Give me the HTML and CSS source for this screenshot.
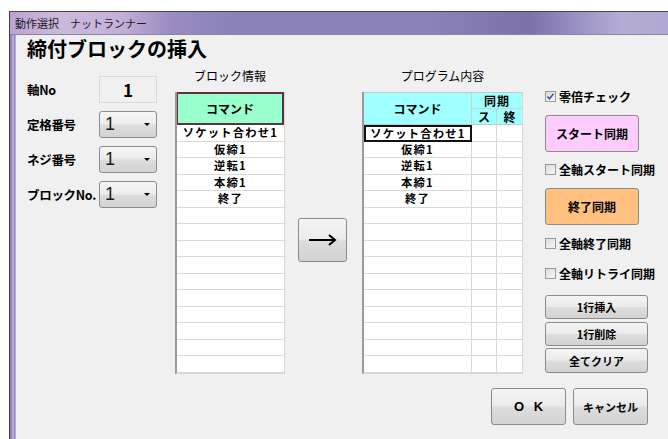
FILE: index.html
```html
<!DOCTYPE html>
<html lang="ja">
<head>
    <meta charset="UTF-8">
    <title>締付ブロックの挿入</title>
    <link rel="stylesheet" href="styles.css">
</head>
<body>

<div class="window">
    <div class="titlebar">動作選択　ナットランナー</div>
    <div class="client">
        <h1 class="dlg-title">締付ブロックの挿入</h1>

        <div class="main">
            <div class="params">
                <div class="param-row">
                    <span class="param-label">軸No</span>
                    <span class="axis-box">1</span>
                </div>
                <div class="param-row">
                    <span class="param-label">定格番号</span>
                    <span class="combo">1</span>
                </div>
                <div class="param-row">
                    <span class="param-label">ネジ番号</span>
                    <span class="combo">1</span>
                </div>
                <div class="param-row">
                    <span class="param-label">ブロックNo.</span>
                    <span class="combo">1</span>
                </div>
            </div>

            <div class="block-col">
                <div class="col-caption">ブロック情報</div>
                <div class="grid block-grid">
                    <div class="block-head">コマンド</div>
                    <div class="row">ソケット合わせ1</div>
                    <div class="row">仮締1</div>
                    <div class="row">逆転1</div>
                    <div class="row">本締1</div>
                    <div class="row">終了</div>
                    <div class="row"></div>
                    <div class="row"></div>
                    <div class="row"></div>
                    <div class="row"></div>
                    <div class="row"></div>
                    <div class="row"></div>
                    <div class="row"></div>
                    <div class="row"></div>
                    <div class="row"></div>
                    <div class="row"></div>
                </div>
            </div>

            <div class="arrow-col">
                <button class="btn arrow-btn" type="button">
                    <svg width="30" height="14" viewBox="0 0 30 14">
                        <path d="M1 7 H27" stroke="#000" stroke-width="2" fill="none"/>
                        <path d="M21 2 L27 7 L21 12" stroke="#000" stroke-width="2" fill="none"/>
                    </svg>
                </button>
            </div>

            <div class="prog-col">
                <div class="col-caption">プログラム内容</div>
                <div class="grid prog-grid">
                    <div class="prog-head">
                        <div class="ph-cmd">コマンド</div>
                        <div class="ph-sync">同期</div>
                        <div class="ph-s">ス</div>
                        <div class="ph-e">終</div>
                    </div>
                    <div class="prow selected"><span class="cmd">ソケット合わせ1</span><span></span><span></span></div>
                    <div class="prow"><span class="cmd">仮締1</span><span></span><span></span></div>
                    <div class="prow"><span class="cmd">逆転1</span><span></span><span></span></div>
                    <div class="prow"><span class="cmd">本締1</span><span></span><span></span></div>
                    <div class="prow"><span class="cmd">終了</span><span></span><span></span></div>
                    <div class="prow"><span class="cmd"></span><span></span><span></span></div>
                    <div class="prow"><span class="cmd"></span><span></span><span></span></div>
                    <div class="prow"><span class="cmd"></span><span></span><span></span></div>
                    <div class="prow"><span class="cmd"></span><span></span><span></span></div>
                    <div class="prow"><span class="cmd"></span><span></span><span></span></div>
                    <div class="prow"><span class="cmd"></span><span></span><span></span></div>
                    <div class="prow"><span class="cmd"></span><span></span><span></span></div>
                    <div class="prow"><span class="cmd"></span><span></span><span></span></div>
                    <div class="prow"><span class="cmd"></span><span></span><span></span></div>
                    <div class="prow"><span class="cmd"></span><span></span><span></span></div>
                </div>
            </div>

            <div class="side-col">
                <label class="check chk-zero"><span class="box checked"><svg width="9" height="9" viewBox="0 0 9 9"><path d="M1.5 4.5 L3.5 6.8 L7.5 1.8" stroke="#2a4fa8" stroke-width="1.4" fill="none"/></svg></span>零倍チェック</label>
                <button class="btn color-btn pink" type="button">スタート同期</button>
                <label class="check chk-allstart"><span class="box"></span>全軸スタート同期</label>
                <button class="btn color-btn orange" type="button">終了同期</button>
                <label class="check chk-allend"><span class="box"></span>全軸終了同期</label>
                <label class="check chk-retry"><span class="box"></span>全軸リトライ同期</label>
                <button class="btn small-btn btn-insert" type="button">1行挿入</button>
                <button class="btn small-btn btn-delete" type="button">1行削除</button>
                <button class="btn small-btn btn-clear" type="button">全てクリア</button>
            </div>
        </div>

        <div class="footer">
            <button class="btn footer-btn ok-btn" type="button">O K</button>
            <button class="btn footer-btn" type="button">キャンセル</button>
        </div>
    </div>
</div>

</body>
</html>
```

FILE: styles.css
```css
* {
    box-sizing: border-box;
}
body {
    margin: 0;
    width: 668px;
    height: 439px;
    overflow: hidden;
    background: #ffffff;
    font-family: "Noto Sans CJK JP", "Noto Sans", sans-serif;
    color: #000;
}

/* window frame */
.window {
    margin: 11px 0 0 9px;
    width: 659px;
    height: 428px;
    border-top: 1px solid #4a4658;
    border-left: 1px solid #3e3a4c;
    background: linear-gradient(90deg, #9484c0 0, #9484c0 2px, #b8a8d8 2px, #b8a8d8 4px, #9a8cc6 4px);
}
.titlebar {
    height: 23px;
    padding-left: 5px;
    border-bottom: 1px solid #8a8698;
    background: linear-gradient(90deg, #bba4d0 0, #cbbadc 50px, #c3b0d8 110px, #9a8cc2 160px, #8b82ba 220px, #8a82b8 420px, #7c71a8 520px, #968cc2 560px, #b4acd2 610px, #b0a8d0 660px);
    font-size: 11px;
    line-height: 22px;
    color: #1a1a1a;
}
.client {
    height: 404px;
    margin-left: 5px;
    border-left: 1px solid #b4accc;
    background: #f0f0f0;
    padding: 1px 0 0 11px;
}
.dlg-title {
    margin: 0;
    font-size: 20px;
    line-height: 26px;
    font-weight: bold;
}

.main {
    display: flex;
    margin-top: 6px;
    height: 306px;
}

/* left parameters */
.params {
    width: 130px;
    padding-top: 8px;
    display: flex;
    flex-direction: column;
    gap: 8px;
}
.param-row {
    display: flex;
    align-items: center;
    height: 27px;
}
.param-label {
    width: 72px;
    font-size: 12.5px;
    font-weight: bold;
    letter-spacing: -0.3px;
}
.axis-box {
    width: 58px;
    height: 27px;
    border: 1px solid #dadada;
    background: #f0f0f0;
    text-align: center;
    font-size: 17px;
    font-weight: bold;
    line-height: 25px;
}
.combo {
    width: 58px;
    height: 27px;
    display: flex;
    align-items: center;
    padding-left: 5px;
    border: 1px solid #8c8c8c;
    border-radius: 3px;
    background: linear-gradient(#f6f6f6, #ececec 48%, #dddddd 52%, #d3d3d3);
    font-family: "Liberation Sans", sans-serif;
    font-size: 18px;
    color: #1a1a1a;
}
.combo::after {
    content: "";
    margin-left: auto;
    margin-right: 6px;
    border-left: 3px solid transparent;
    border-right: 3px solid transparent;
    border-top: 3px solid #000;
}

/* tables */
.col-caption {
    height: 16px;
    margin-bottom: 8px;
    font-size: 12px;
    line-height: 16px;
    text-align: center;
}
.grid {
    height: 282px;
    background: #fff;
    border-left: 2px solid #9a9a9a;
    border-right: 1px solid #d6d6d6;
    border-bottom: 1px solid #d6d6d6;
}
.block-col {
    width: 110px;
    margin-left: 18px;
}
.block-head {
    height: 33px;
    border: 2px solid #5c3446;
    border-left-width: 1px;
    background: #99ffcc;
    font-size: 12px;
    font-weight: bold;
    line-height: 29px;
    text-align: center;
}
.row {
    height: 16.5px;
    border-bottom: 1px solid #d8d8d8;
    font-size: 11.3px;
    font-weight: bold;
    letter-spacing: 1.2px;
    line-height: 15px;
    text-align: center;
    white-space: nowrap;
}

.arrow-col {
    margin-left: 13px;
    padding-top: 150px;
}
.arrow-btn {
    width: 49px;
    height: 44px;
    display: flex;
    align-items: center;
    justify-content: center;
}

.prog-col {
    width: 161px;
    margin-left: 15px;
}
.prog-head {
    display: grid;
    grid-template-columns: 108px 25px 1fr;
    grid-template-rows: 16px 16px;
    height: 33px;
    background: #a0ffff;
    border-top: 1px solid #c8c8c8;
    border-bottom: 1px solid #c8c8c8;
    font-size: 12px;
    font-weight: bold;
}
.prog-head div {
    text-align: center;
}
.ph-cmd {
    grid-row: 1 / 3;
    line-height: 31px;
    border-right: 1px solid #d0d0d0;
}
.ph-sync {
    grid-column: 2 / 4;
    line-height: 15px;
    letter-spacing: 1px;
    border-bottom: 1px solid #d0d0d0;
}
.ph-s {
    line-height: 15px;
    border-right: 1px solid #d0d0d0;
}
.ph-e {
    line-height: 15px;
}
.prow {
    display: grid;
    grid-template-columns: 108px 25px 1fr;
    height: 16.5px;
    border-bottom: 1px solid #d8d8d8;
}
.prow span {
    border-right: 1px solid #d8d8d8;
}
.prow span:last-child {
    border-right: none;
}
.prow .cmd {
    font-size: 11.3px;
    font-weight: bold;
    letter-spacing: 1.2px;
    line-height: 15px;
    text-align: center;
    white-space: nowrap;
}
.prow.selected .cmd {
    border: 2px solid #111;
    line-height: 12px;
    height: 17px;
}

/* right column */
.side-col {
    width: 110px;
    margin-left: 22px;
    padding-top: 20px;
    display: flex;
    flex-direction: column;
    align-items: flex-start;
}
.check {
    display: flex;
    align-items: center;
    height: 16px;
    font-size: 12px;
    font-weight: bold;
    white-space: nowrap;
}
.box {
    width: 11px;
    height: 11px;
    margin-right: 3px;
    border: 1px solid #9a9a9a;
    background: linear-gradient(135deg, #dcdcdc, #f6f6f6);
    display: flex;
    align-items: center;
    justify-content: center;
}
.chk-allstart { margin-top: 9px; }
.chk-allend { margin-top: 10px; }
.chk-retry { margin-top: 14px; }

.btn {
    padding: 0;
    border: 1px solid #8a8a8a;
    border-radius: 3px;
    background: linear-gradient(#f4f4f4, #ebebeb 48%, #dddddd 52%, #d2d2d2);
    font-family: "Noto Sans CJK JP", "Noto Sans", sans-serif;
    font-weight: bold;
    color: #000;
}
.color-btn {
    width: 94px;
    height: 37px;
    margin-top: 11px;
    font-size: 12px;
}
.pink {
    background: #ffccff;
}
.orange {
    background: #ffc080;
}
.small-btn {
    width: 103px;
    height: 24px;
    font-size: 11px;
}
.btn-insert { margin-top: 14px; }
.btn-delete { margin-top: 3px; }
.btn-clear { margin-top: 2px; height: 25px; }

.footer {
    width: 621px;
    margin-top: 14px;
    display: flex;
    justify-content: flex-end;
    gap: 7px;
}
.footer-btn {
    width: 75px;
    height: 37px;
    font-size: 11px;
}
.ok-btn {
    font-family: "Liberation Sans", sans-serif;
    font-size: 13px;
    word-spacing: 6px;
}
```
